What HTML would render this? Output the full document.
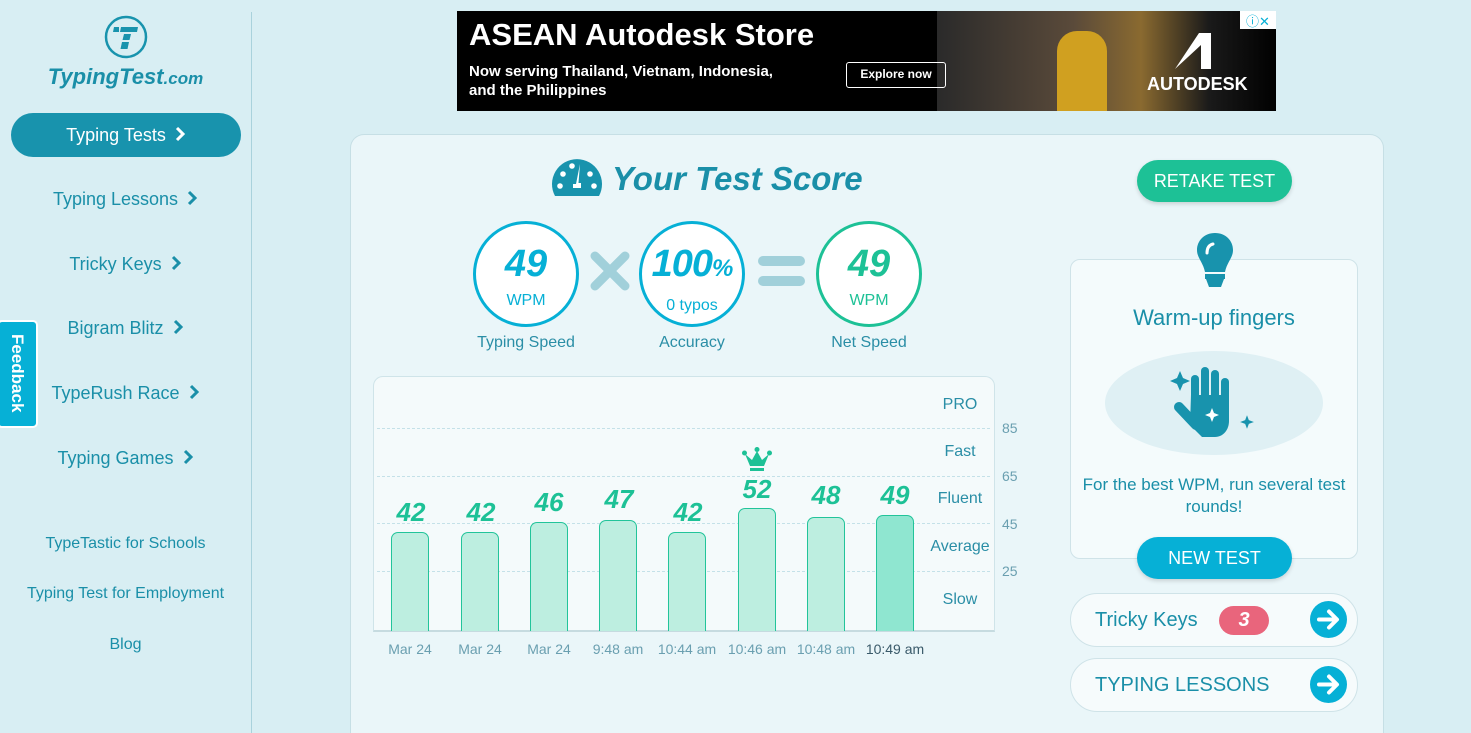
<!DOCTYPE html>
<html><head><meta charset="utf-8"><style>
*{box-sizing:border-box;margin:0;padding:0}
html,body{width:1471px;height:733px;overflow:hidden}
body{background:#d8eef3;font-family:"Liberation Sans",sans-serif;position:relative;color:#1a8fa8}
.a{position:absolute}
.nav{position:absolute;left:0;width:251px;text-align:center;font-size:18px;color:#1a8fa8}
.chev{display:inline-block;margin-left:8px;vertical-align:-1px}
.low{position:absolute;left:0;width:251px;text-align:center;font-size:16px;color:#1a8fa8}
.circ{position:absolute;width:106px;height:106px;border-radius:50%;background:#fff;border:3px solid #06b0d6;text-align:center}
.circ .n{font-size:38px;font-weight:bold;font-style:italic;color:#06b0d6;margin-top:18px;line-height:44px}
.circ .s{font-size:16px;color:#06b0d6;margin-top:6px}
.lab{position:absolute;font-size:16px;color:#2a8ea6;text-align:center;width:160px}
.bar{position:absolute;width:38px;background:#bdeee0;border:1.5px solid #22c49a;border-bottom:none;border-radius:7px 7px 0 0}
.val{position:absolute;width:70px;text-align:center;font-size:26px;font-weight:bold;font-style:italic;color:#1dc196}
.xl{position:absolute;width:80px;text-align:center;font-size:14px;color:#6a9fb0;top:641px}
.dash{position:absolute;left:377px;width:613px;border-top:1.5px dashed #c4e1e8}
.tick{position:absolute;left:1002px;font-size:14px;color:#6a9fb0}
.lvl{position:absolute;width:80px;text-align:center;font-size:16px;color:#2a8ea6;left:920px}
.pill{position:absolute;left:1070px;width:288px;height:54px;border:1.5px solid #cfe3e8;border-radius:27px;background:#f6fbfc}
.arr{position:absolute;right:10px;top:7px;width:37px;height:37px;border-radius:50%;background:#06b0d6}
</style></head><body>
<div class="a" style="left:251px;top:12px;width:1px;height:721px;background:#a9d2dc"></div>
<svg class="a" style="left:104px;top:15px" width="44" height="44" viewBox="0 0 44 44"><circle cx="22" cy="22" r="20" fill="none" stroke="#1893ad" stroke-width="2.5"/><path d="M10 12h5v5h-6zM17 12h17l-1 5H16zM20 19h7l-1.5 6h-7zM18 27h7l-1.5 7h-7z" fill="#1893ad"/></svg>
<div class="a" style="left:0;width:251px;top:64px;text-align:center;font-size:22px;font-weight:bold;font-style:italic;color:#1a8fa8">TypingTest<span style="font-size:17px">.com</span></div>
<div class="a" style="left:11px;top:113px;width:230px;height:44px;border-radius:22px;background:#1893ad;color:#fff;font-size:18px;text-align:center;line-height:44px">Typing Tests<svg class="chev" width="12" height="16"><path d="M3 2l6 6-6 6" stroke="#fff" stroke-width="3" fill="none"/></svg></div>
<div class="nav" style="top:189px">Typing Lessons<svg class="chev" width="12" height="16"><path d="M3 2l6 6-6 6" stroke="#1a8fa8" stroke-width="3" fill="none"/></svg></div>
<div class="nav" style="top:254px">Tricky Keys<svg class="chev" width="12" height="16"><path d="M3 2l6 6-6 6" stroke="#1a8fa8" stroke-width="3" fill="none"/></svg></div>
<div class="nav" style="top:318px">Bigram Blitz<svg class="chev" width="12" height="16"><path d="M3 2l6 6-6 6" stroke="#1a8fa8" stroke-width="3" fill="none"/></svg></div>
<div class="nav" style="top:383px">TypeRush Race<svg class="chev" width="12" height="16"><path d="M3 2l6 6-6 6" stroke="#1a8fa8" stroke-width="3" fill="none"/></svg></div>
<div class="nav" style="top:448px">Typing Games<svg class="chev" width="12" height="16"><path d="M3 2l6 6-6 6" stroke="#1a8fa8" stroke-width="3" fill="none"/></svg></div>
<div class="low" style="top:535px">TypeTastic for Schools</div>
<div class="low" style="top:585px">Typing Test for Employment</div>
<div class="low" style="top:636px">Blog</div>
<div class="a" style="left:-3px;top:320px;width:41px;height:108px;background:#06b0d6;border:2px solid #fff;border-radius:5px"><div style="position:absolute;left:8px;top:12px;writing-mode:vertical-rl;color:#fff;font-weight:bold;font-size:17px">Feedback</div></div>
<div class="a" style="left:457px;top:11px;width:819px;height:100px;background:#000;overflow:hidden">
 <div class="a" style="left:480px;top:0;width:340px;height:100px;background:linear-gradient(90deg,#2a2a2a,#5a4a3a 40%,#8a6a30 60%,#1a1a1a 80%,#000)"></div>
 <div class="a" style="left:600px;top:20px;width:50px;height:80px;background:#d0a020;border-radius:20px 20px 0 0"></div>
 <div class="a" style="left:12px;top:6px;color:#fff;font-weight:bold;font-size:31px">ASEAN Autodesk Store</div>
 <div class="a" style="left:12px;top:51px;color:#fff;font-weight:bold;font-size:15px;line-height:19px">Now serving Thailand, Vietnam, Indonesia,<br>and the Philippines</div>
 <div class="a" style="left:389px;top:51px;width:100px;height:26px;border:1.5px solid #fff;border-radius:3px;color:#fff;font-size:12px;font-weight:bold;text-align:center;line-height:23px">Explore now</div>
 <svg class="a" style="left:716px;top:20px" width="40" height="40"><path d="M2 38 L26 2 H38 V38 H28 V14 Z" fill="#fff"/></svg>
 <div class="a" style="left:690px;top:63px;color:#fff;font-weight:bold;font-size:18px">AUTODESK</div>
 <div class="a" style="left:783px;top:0;width:36px;height:18px;background:#fff;color:#06b0d6;font-size:13px;text-align:center">ⓘ✕</div>
</div>
<div class="a" style="left:350px;top:134px;width:1034px;height:599px;background:#eaf6f9;border:1.5px solid #c6dfe5;border-bottom:none;border-radius:14px 14px 0 0"></div>
<svg class="a" style="left:551px;top:156px" width="52" height="40" viewBox="0 0 52 40"><path d="M4 40 A25 25 0 1 1 48 40Z" fill="#1893ad"/><circle cx="9" cy="30" r="2.8" fill="#fff"/><circle cx="12" cy="18" r="2.8" fill="#fff"/><circle cx="21" cy="10" r="2.8" fill="#fff"/><circle cx="39" cy="18" r="2.8" fill="#fff"/><circle cx="43" cy="30" r="2.8" fill="#fff"/><path d="M29 8 L27.5 27 h2.5 v5 h-8 v-4 h3 Z" fill="#fff"/></svg>
<div class="a" style="left:612px;top:160px;font-size:33px;font-weight:bold;font-style:italic;color:#1a8fa8">Your Test Score</div>
<div class="circ" style="left:473px;top:221px"><div class="n">49</div><div class="s">WPM</div></div>
<div class="circ" style="left:639px;top:221px"><div class="n" style="letter-spacing:-1px">100<span style="font-size:24px">%</span></div><div class="s">0 typos</div></div>
<div class="circ" style="left:816px;top:221px;border-color:#1dc196"><div class="n" style="color:#1dc196">49</div><div class="s" style="color:#1dc196">WPM</div></div>
<svg class="a" style="left:590px;top:251px" width="40" height="40"><path d="M5 5L35 35M35 5L5 35" stroke="#a1d0da" stroke-width="9" stroke-linecap="round"/></svg>
<div class="a" style="left:758px;top:256px;width:47px;height:10px;border-radius:5px;background:#a1d0da"></div>
<div class="a" style="left:758px;top:276px;width:47px;height:10px;border-radius:5px;background:#a1d0da"></div>
<div class="lab" style="left:446px;top:334px">Typing Speed</div>
<div class="lab" style="left:612px;top:334px">Accuracy</div>
<div class="lab" style="left:789px;top:334px">Net Speed</div>
<div class="a" style="left:373px;top:376px;width:622px;height:256px;background:#f4fafb;border:1.5px solid #cfe4e9;border-bottom:2px solid #c6dbe0;border-radius:10px 10px 0 0"></div>
<div class="dash" style="top:428px"></div><div class="dash" style="top:476px"></div><div class="dash" style="top:523px"></div><div class="dash" style="top:571px"></div>
<div class="tick" style="top:420px">85</div><div class="tick" style="top:468px">65</div><div class="tick" style="top:516px">45</div><div class="tick" style="top:563px">25</div>
<div class="lvl" style="top:396px">PRO</div><div class="lvl" style="top:443px">Fast</div><div class="lvl" style="top:490px">Fluent</div><div class="lvl" style="top:538px">Average</div><div class="lvl" style="top:591px">Slow</div>
<div class="bar" style="left:391px;top:532px;height:99px"></div><div class="val" style="left:376px;top:497px">42</div><div class="xl" style="left:370px">Mar 24</div>
<div class="bar" style="left:461px;top:532px;height:99px"></div><div class="val" style="left:446px;top:497px">42</div><div class="xl" style="left:440px">Mar 24</div>
<div class="bar" style="left:530px;top:522px;height:109px"></div><div class="val" style="left:514px;top:487px">46</div><div class="xl" style="left:509px">Mar 24</div>
<div class="bar" style="left:599px;top:520px;height:111px"></div><div class="val" style="left:584px;top:484px">47</div><div class="xl" style="left:578px">9:48 am</div>
<div class="bar" style="left:668px;top:532px;height:99px"></div><div class="val" style="left:653px;top:497px">42</div><div class="xl" style="left:647px">10:44 am</div>
<div class="bar" style="left:738px;top:508px;height:123px"></div><div class="val" style="left:722px;top:474px">52</div><div class="xl" style="left:717px">10:46 am</div>
<svg class="a" style="left:742px;top:447px" width="30" height="26" viewBox="0 0 30 26"><circle cx="2.5" cy="6" r="2.5" fill="#1dc196"/><circle cx="15" cy="2.5" r="2.5" fill="#1dc196"/><circle cx="27.5" cy="6" r="2.5" fill="#1dc196"/><path d="M3 7L8 19H22L27 7L20 13L15 4L10 13Z" fill="#1dc196"/><rect x="8" y="21" width="14" height="3" fill="#1dc196"/></svg>
<div class="bar" style="left:807px;top:517px;height:114px"></div><div class="val" style="left:791px;top:480px">48</div><div class="xl" style="left:786px">10:48 am</div>
<div class="bar" style="left:876px;top:515px;height:116px;background:#8fe6d0"></div><div class="val" style="left:860px;top:480px">49</div><div class="xl" style="left:855px;color:#3a5a6a">10:49 am</div>
<div class="a" style="left:1137px;top:160px;width:155px;height:42px;border-radius:21px;background:#1dc196;color:#fff;font-size:18px;text-align:center;line-height:42px;box-shadow:0 2px 4px rgba(0,0,0,.15)">RETAKE TEST</div>
<div class="a" style="left:1070px;top:259px;width:288px;height:300px;background:#f4fbfc;border:1.5px solid #cfe3e8;border-radius:10px"></div>
<svg class="a" style="left:1195px;top:232px" width="40" height="56" viewBox="0 0 40 56"><path d="M20 1C9 1 2 9 2 18c0 8 6 12 8 22h20c2-10 8-14 8-22C38 9 31 1 20 1Z" fill="#1893ad"/><rect x="10" y="42" width="20" height="5" fill="#1893ad"/><path d="M11 47h18l-3 8h-12z" fill="#1893ad"/><path d="M12 21c0-5 2-8 6-9" stroke="#fff" stroke-width="3" fill="none" stroke-linecap="round"/></svg>
<div class="a" style="left:1070px;top:305px;width:288px;text-align:center;font-size:22px;color:#1a8fa8">Warm-up fingers</div>
<div class="a" style="left:1105px;top:351px;width:218px;height:104px;border-radius:50%;background:#dff0f4"></div>
<svg class="a" style="left:1168px;top:365px" width="92" height="76" viewBox="0 0 92 76">
<g fill="#1893ad"><rect x="23" y="10" width="8" height="40" rx="4"/><rect x="33" y="2" width="8" height="45" rx="4"/><rect x="43" y="5" width="8" height="45" rx="4"/><rect x="53" y="13" width="8" height="40" rx="4"/><path d="M23 30H61V56c0 9-6 16-14 16H34L22 60z"/>
<path d="M12 6l3 7 7 3-7 3-3 7-3-7-7-3 7-3z"/></g>
<path d="M11 42L28 60" stroke="#1893ad" stroke-width="10" stroke-linecap="round"/>
<path d="M44 43l2 5 5 2-5 2-2 5-2-5-5-2 5-2z" fill="#fff"/>
<path d="M79 46l3 8 8 3-8 3-3 8-3-8-8-3 8-3z" fill="#1893ad" stroke="#dff0f4" stroke-width="3"/></svg>
<div class="a" style="left:1070px;top:474px;width:288px;text-align:center;font-size:17px;line-height:22px;color:#1a8fa8">For the best WPM, run several test rounds!</div>
<div class="a" style="left:1137px;top:537px;width:155px;height:42px;border-radius:21px;background:#06b0d6;color:#fff;font-size:18px;text-align:center;line-height:42px;box-shadow:0 2px 4px rgba(0,0,0,.15)">NEW TEST</div>
<div class="pill" style="top:593px"><div class="a" style="left:24px;top:15px;font-size:20px;color:#1a8fa8">Tricky Keys</div><div class="a" style="left:148px;top:12px;width:50px;height:29px;border-radius:15px;background:#e9657c;color:#fff;font-size:20px;font-weight:bold;font-style:italic;text-align:center;line-height:29px">3</div><div class="arr"><svg width="37" height="37"><path d="M9 18.5h17M19 10.5l8 8-8 8" stroke="#fff" stroke-width="4" fill="none" stroke-linecap="round" stroke-linejoin="round"/></svg></div></div>
<div class="pill" style="top:658px"><div class="a" style="left:24px;top:15px;font-size:20px;color:#1a8fa8">TYPING LESSONS</div><div class="arr"><svg width="37" height="37"><path d="M9 18.5h17M19 10.5l8 8-8 8" stroke="#fff" stroke-width="4" fill="none" stroke-linecap="round" stroke-linejoin="round"/></svg></div></div>
</body></html>
